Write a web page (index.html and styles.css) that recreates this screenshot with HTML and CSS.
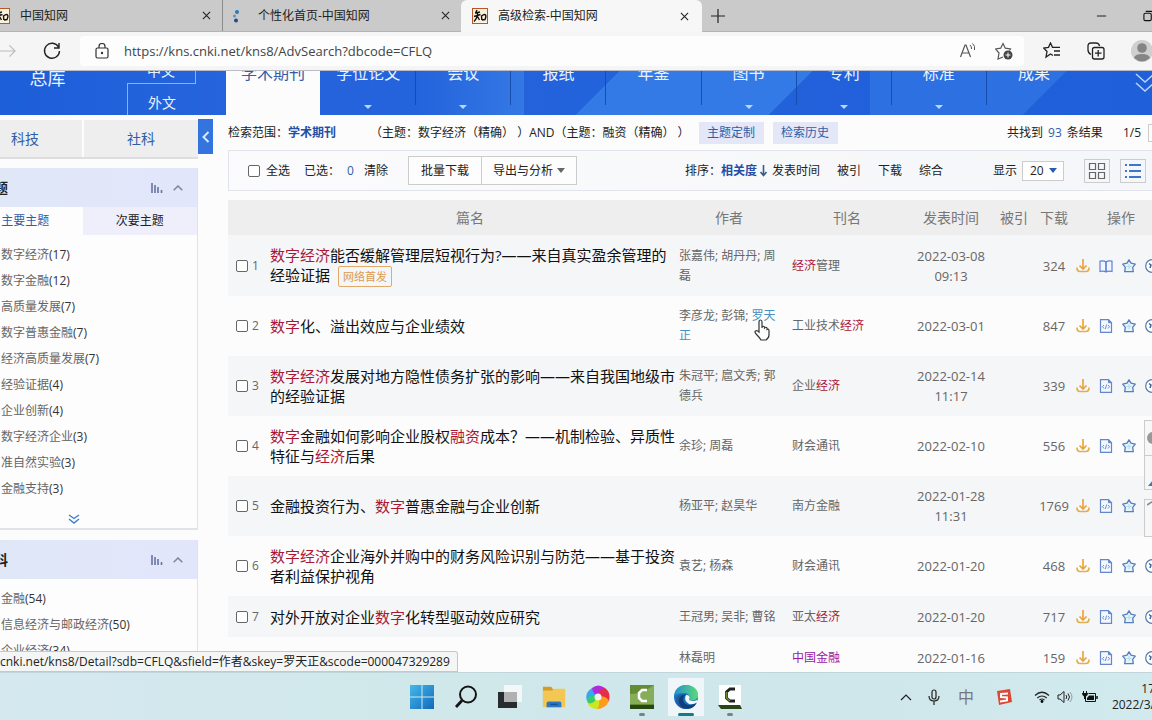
FILE: index.html
```html
<!DOCTYPE html>
<html lang="zh-CN">
<head>
<meta charset="utf-8">
<title>高级检索-中国知网</title>
<link rel="stylesheet" href="styles.css">
</head>
<body>
<svg class="defs" aria-hidden="true">
  <symbol id="close" viewBox="0 0 10 10"><path d="M1 1l8 8M9 1l-8 8" stroke="#222" stroke-width="1.2" fill="none"/></symbol>
  <symbol id="logo" viewBox="0 0 16 16"><rect x=".5" y=".5" width="15" height="15" fill="#fdf1dc" stroke="#b8572a"/><path d="M5 2L3.500 5M3 5l5-1M2 8.500l6.500-2M5.800 4.500C5.500 9 4 11.500 2 13.500M5.500 8.500l2 3.500M9.500 7.500l.3 4.500M9.500 8c4-3 5.500-1 3.500 3.500l-3 .5" stroke="#111" stroke-width="1.400" fill="none"/></symbol>
  <symbol id="down" viewBox="0 0 14 14"><path d="M7 0v10M3.500 6.500L7 10l3.500-3.500" fill="none" stroke="#eda33b" stroke-width="1.700"/><path d="M1 8.500c0 3 1 4 3 4h6c2 0 3-1 3-4" fill="none" stroke="#dfb04f" stroke-width="1.700"/></symbol>
  <symbol id="html" viewBox="0 0 14 14"><path d="M1.500.7h8l3 3v9.600h-11z" fill="#f3f7fe" stroke="#6487cc" stroke-width="1.200"/><path d="M9.500.7v3h3" fill="#6487cc" stroke="#6487cc"/><path d="M5 6L3.500 7.700 5 9.500M9 6l1.500 1.700L9 9.500M7.600 5.500l-1.200 4.500" fill="none" stroke="#6d91d0"/></symbol>
  <symbol id="book" viewBox="0 0 14 14"><path d="M7 3C5.500 1.800 3 1.800 1 2.200v10.300c2-.4 4.500-.4 6 .5 1.500-.9 4-.9 6-.5V2.200C11 1.800 8.500 1.800 7 3zv10" fill="#f0f5ff" stroke="#5e83d2" stroke-width="1.200"/><path d="M7 3v10" stroke="#5e83d2" stroke-width="1.200"/></symbol>
  <symbol id="star" viewBox="0 0 14 14"><path d="M7 .8l2 3.400 4.300 1-2.600 3.200.6 4.300H2.700l.6-4.300L.7 5.200l4.300-1z" fill="#e5f4fa" stroke="#557fbd" stroke-width="1.300" stroke-linejoin="round"/><path d="M4.500 7.500h5M7 5v5" stroke="#b6dbed"/></symbol>
  <symbol id="quote" viewBox="0 0 14 14"><circle cx="7" cy="7" r="6.300" fill="#fff" stroke="#567aa9" stroke-width="1.200"/><path d="M4 4.500l2 1.500-1 3M8 4.500l2 1.500-1 3" stroke="#36669d" stroke-width="1.500" fill="none"/></symbol>
  <symbol id="bars" viewBox="0 0 12 10"><path d="M1 0v10M4 2v8M7 4v6M10.500 7v3" stroke="#6675a0" stroke-width="1.600"/></symbol>
  <symbol id="up" viewBox="0 0 10 6"><path d="M.7 5.300L5 1l4.300 4.300" stroke="#7c85a2" stroke-width="1.500" fill="none"/></symbol>
</svg>

<header class="tabs">
  <div class="tab"><svg class="fav"><use href="#logo"/></svg><span>中国知网</span><button aria-label="关闭标签页"><svg><use href="#close"/></svg></button></div>
  <div class="tab tab-line"><svg class="fav" viewBox="0 0 16 16"><circle cx="7" cy="4" r="2" fill="#2e76b4"/><circle cx="4.500" cy="8" r="1.500" fill="#5c96c2"/><circle cx="6" cy="12.500" r="2" fill="#1c4e88"/></svg><span>个性化首页-中国知网</span><button aria-label="关闭标签页"><svg><use href="#close"/></svg></button></div>
  <div class="tab active"><svg class="fav"><use href="#logo"/></svg><span>高级检索-中国知网</span><button aria-label="关闭标签页"><svg><use href="#close"/></svg></button></div>
  <button class="plus" aria-label="新建标签页"><svg viewBox="0 0 14 14"><path d="M7 0v14M0 7h14" stroke="#222" stroke-width="1.200"/></svg></button>
  <div class="window-buttons">
    <button aria-label="最小化"><svg viewBox="0 0 12 12"><path d="M1 6h10" stroke="#111"/></svg></button>
    <button aria-label="还原"><svg viewBox="0 0 12 12"><rect x="1" y="3" width="8" height="8" rx="1.500" fill="none" stroke="#111" stroke-width="1.200"/><path d="M3 1h6q2 0 2 2v6" fill="none" stroke="#111" stroke-width="1.200"/></svg></button>
  </div>
</header>

<div class="toolbar">
  <button class="forward" aria-label="前进"><svg viewBox="0 0 18 14"><path d="M0 7h16M10 1l6 6-6 6" fill="none" stroke="#bbb" stroke-width="1.200"/></svg></button>
  <button class="reload" aria-label="刷新"><svg viewBox="0 0 18 18"><path d="M15.500 5A7.500 7.500 0 1 0 16.500 9M16 1v5h-5" fill="none" stroke="#222" stroke-width="1.400"/></svg></button>
  <div class="address">
    <svg class="lock" viewBox="0 0 14 16"><rect x="1" y="5" width="12" height="10" rx="1.500" fill="none" stroke="#333" stroke-width="1.200"/><path d="M4 5V3.500a3 3 0 0 1 6 0V5" fill="none" stroke="#333" stroke-width="1.200"/><circle cx="7" cy="10" r="1.200" fill="#333"/></svg>
    <input type="text" aria-label="地址栏" value="https://kns.cnki.net/kns8/AdvSearch?dbcode=CFLQ">
    <button aria-label="大声朗读"><svg viewBox="0 0 18 18"><path d="M1.500 15L6 3h1l4.500 12M3 11h7" fill="none" stroke="#555" stroke-width="1.200"/><path d="M11 3q2 2 1.500 4M13.500 1.500q3 2.500 2 6.500" fill="none" stroke="#555"/></svg></button>
    <button aria-label="添加到收藏夹"><svg viewBox="0 0 18 18"><path d="M8 15l-5 2 1-6-3.500-4 5.200-.8L8 1.500l2.300 4.700 5.200.8-1 1.500" fill="none" stroke="#555" stroke-width="1.200"/><circle cx="13" cy="13" r="4.500" fill="#444"/><path d="M13 10.500v5M10.500 13h5" stroke="#fff"/></svg></button>
  </div>
  <div class="tools">
    <button aria-label="收藏夹"><svg viewBox="0 0 18 18"><path d="M10 13.500L7.500 12 3 15l1-5.500L.7 6l4.800-.7L7.500 1l2 4.300h7.500M11 9h6M11 13h6" fill="none" stroke="#222" stroke-width="1.300"/></svg></button>
    <button aria-label="集锦"><svg viewBox="0 0 18 18"><path d="M4 12.500Q1 11 1 8V4q0-3 3-3h5q3 0 3.500 3" fill="none" stroke="#222" stroke-width="1.300"/><rect x="5.500" y="5.500" width="11.500" height="11.500" rx="2" fill="none" stroke="#222" stroke-width="1.300"/><path d="M11.200 8v6.500M8 11.200h6.500" stroke="#222" stroke-width="1.300"/></svg></button>
    <button class="profile" aria-label="个人资料"><svg viewBox="0 0 22 22"><circle cx="11" cy="11" r="11" fill="#cfcfcf"/><circle cx="11" cy="8" r="4.800" fill="#858585"/><path d="M3 18q1-4 8-4t8 4q-8 7-16 0" fill="#858585"/></svg></button>
  </div>
</div>

<main class="view">
  <nav class="databases">
    <a class="total" href="#">总库</a>
    <div class="language"><a href="#">中文</a><a href="#">外文</a></div>
    <div class="kinds">
      <a class="current" href="#">学术期刊</a><a class="more" href="#">学位论文</a><a class="more" href="#">会议</a><a href="#">报纸</a><a href="#">年鉴</a><a class="more" href="#">图书</a><a class="more" href="#">专利</a><a class="more" href="#">标准</a><a href="#">成果</a>
    </div>
    <button class="expand" aria-label="展开"><svg viewBox="0 0 20 24"><path d="M1 3l9 8 9-8M1 12l9 8 9-8" stroke="#b9d5ff" stroke-width="1.500" fill="none"/></svg></button>
  </nav>

  <div class="page">
    <aside class="side">
      <div class="fields"><button>科技</button><button>社科</button></div>
      <section class="card">
        <h2>主题<span><svg class="bars"><use href="#bars"/></svg><svg class="up"><use href="#up"/></svg></span></h2>
        <div class="switch"><button class="on">主要主题</button><button>次要主题</button></div>
        <ul>
          <li><a href="#">数字经济</a>(17)</li><li><a href="#">数字金融</a>(12)</li><li><a href="#">高质量发展</a>(7)</li><li><a href="#">数字普惠金融</a>(7)</li><li><a href="#">经济高质量发展</a>(7)</li><li><a href="#">经验证据</a>(4)</li><li><a href="#">企业创新</a>(4)</li><li><a href="#">数字经济企业</a>(3)</li><li><a href="#">准自然实验</a>(3)</li><li><a href="#">金融支持</a>(3)</li>
        </ul>
        <button class="unfold" aria-label="更多"><svg viewBox="0 0 12 10"><path d="M1 1l5 3.500L11 1M1 5l5 4 5-4" stroke="#427bc9" stroke-width="1.400" fill="none"/></svg></button>
      </section>
      <section class="card">
        <h2>学科<span><svg class="bars"><use href="#bars"/></svg><svg class="up"><use href="#up"/></svg></span></h2>
        <ul><li><a href="#">金融</a>(54)</li><li><a href="#">信息经济与邮政经济</a>(50)</li><li><a href="#">企业经济</a>(34)</li></ul>
      </section>
    </aside>
    <button class="collapse" aria-label="收起"><svg viewBox="0 0 8 12"><path d="M6.500 1L1.500 6l5 5" stroke="#d8e9ff" stroke-width="2" fill="none"/></svg></button>

    <section class="results">
      <div class="scope">
        <span>检索范围：</span><a class="strong" href="#">学术期刊</a>
        <span class="query">（主题：数字经济（精确） ）AND（主题：融资（精确） ）</span>
        <button class="soft">主题定制</button><button class="soft">检索历史</button>
        <span class="found">共找到 <em>93</em> 条结果</span><span class="pages">1/5</span><span class="pager"></span>
      </div>
      <div class="actions">
        <label class="all"><input type="checkbox">全选</label>
        <span class="chosen">已选：</span><em>0</em><a class="clear" href="#">清除</a>
        <div class="pair"><button>批量下载</button><button>导出与分析<i class="caret"></i></button></div>
        <div class="sort"><span>排序：</span><a class="strong" href="#">相关度<svg viewBox="0 0 8 12"><path d="M4 0v10M1 7l3 3.500L7 7" fill="none" stroke="#3b5a8c" stroke-width="1.600"/></svg></a><a href="#">发表时间</a><a href="#">被引</a><a href="#">下载</a><a href="#">综合</a></div>
        <label class="show">显示<span class="pick"><select><option>20</option></select><i class="caret"></i></span></label>
        <button class="layout" aria-label="网格"><svg viewBox="0 0 18 18"><path d="M1.500 1.500h6v6h-6zM10.500 1.500h6v6h-6zM1.500 10.500h6v6h-6zM10.500 10.500h6v6h-6z" fill="none" stroke="#666" stroke-width="1.200"/></svg></button>
        <button class="layout" aria-label="列表"><svg viewBox="0 0 18 18"><path d="M5 3h12M5 9h12M5 15h12" stroke="#3b78cc" stroke-width="2"/><path d="M1 3h2M1 9h2M1 15h2" stroke="#3b78cc" stroke-width="2"/></svg></button>
      </div>
      <table>
        <colgroup><col class="c-no"><col><col class="c-author"><col class="c-journal"><col class="c-date"><col class="c-num"><col class="c-num"><col class="c-ops"></colgroup>
        <thead><tr><th></th><th>篇名</th><th>作者</th><th>刊名</th><th>发表时间</th><th>被引</th><th>下载</th><th>操作</th></tr></thead>
        <tbody>
          <tr><td class="no"><label><input type="checkbox">1</label></td><td class="name"><a href="#"><b>数字经济</b>能否缓解管理层短视行为?——来自真实盈余管理的<br>经验证据</a><span class="tag">网络首发</span></td><td class="author">张嘉伟; 胡丹丹; 周磊</td><td class="journal"><b>经济</b>管理</td><td class="date">2022-03-08 09:13</td><td></td><td class="num">324</td><td class="ops"><div><svg><use href="#down"/></svg><svg><use href="#book"/></svg><svg><use href="#star"/></svg><svg><use href="#quote"/></svg></div></td></tr>
          <tr><td class="no"><label><input type="checkbox">2</label></td><td class="name"><a href="#"><b>数字</b>化、溢出效应与企业绩效</a></td><td class="author">李彦龙; 彭锦; <a class="hovered" href="#">罗天正<svg class="hand" viewBox="0 0 16 22"><path d="M5 13V3q0-2 1.500-2T8 3v6V8q1.500-1.500 2.500 0v1q1.500-1.500 2.500 0v1.500q2-1 2 1V16q0 3-3 5H7q-1-2-4-5-3-3-1.500-4T5 13z" fill="#fff" stroke="#333" stroke-width="1.200"/></svg></a></td><td class="journal">工业技术<b>经济</b></td><td class="date">2022-03-01</td><td></td><td class="num">847</td><td class="ops"><div><svg><use href="#down"/></svg><svg><use href="#html"/></svg><svg><use href="#star"/></svg><svg><use href="#quote"/></svg></div></td></tr>
          <tr><td class="no"><label><input type="checkbox">3</label></td><td class="name"><a href="#"><b>数字经济</b>发展对地方隐性债务扩张的影响——来自我国地级市<br>的经验证据</a></td><td class="author">朱冠平; 扈文秀; 郭德兵</td><td class="journal">企业<b>经济</b></td><td class="date">2022-02-14 11:17</td><td></td><td class="num">339</td><td class="ops"><div><svg><use href="#down"/></svg><svg><use href="#html"/></svg><svg><use href="#star"/></svg><svg><use href="#quote"/></svg></div></td></tr>
          <tr><td class="no"><label><input type="checkbox">4</label></td><td class="name"><a href="#"><b>数字</b>金融如何影响企业股权<b>融资</b>成本？——机制检验、异质性<br>特征与<b>经济</b>后果</a></td><td class="author">余珍; 周磊</td><td class="journal">财会通讯</td><td class="date">2022-02-10</td><td></td><td class="num">556</td><td class="ops"><div><svg><use href="#down"/></svg><svg><use href="#html"/></svg><svg><use href="#star"/></svg><svg><use href="#quote"/></svg></div></td></tr>
          <tr><td class="no"><label><input type="checkbox">5</label></td><td class="name"><a href="#">金融投资行为、<b>数字</b>普惠金融与企业创新</a></td><td class="author">杨亚平; 赵昊华</td><td class="journal">南方金融</td><td class="date">2022-01-28 11:31</td><td></td><td class="num">1769</td><td class="ops"><div><svg><use href="#down"/></svg><svg><use href="#html"/></svg><svg><use href="#star"/></svg><svg><use href="#quote"/></svg></div></td></tr>
          <tr><td class="no"><label><input type="checkbox">6</label></td><td class="name"><a href="#"><b>数字经济</b>企业海外并购中的财务风险识别与防范——基于投资<br>者利益保护视角</a></td><td class="author">袁艺; 杨森</td><td class="journal">财会通讯</td><td class="date">2022-01-20</td><td></td><td class="num">468</td><td class="ops"><div><svg><use href="#down"/></svg><svg><use href="#html"/></svg><svg><use href="#star"/></svg><svg><use href="#quote"/></svg></div></td></tr>
          <tr class="short"><td class="no"><label><input type="checkbox">7</label></td><td class="name"><a href="#">对外开放对企业<b>数字</b>化转型驱动效应研究</a></td><td class="author">王冠男; 吴非; 曹铭</td><td class="journal">亚太<b>经济</b></td><td class="date">2022-01-20</td><td></td><td class="num">717</td><td class="ops"><div><svg><use href="#down"/></svg><svg><use href="#html"/></svg><svg><use href="#star"/></svg><svg><use href="#quote"/></svg></div></td></tr>
          <tr class="short"><td class="no"></td><td class="name"></td><td class="author">林磊明</td><td class="journal"><a class="visited" href="#">中国金融</a></td><td class="date">2022-01-16</td><td></td><td class="num">159</td><td class="ops"><div><svg><use href="#down"/></svg><svg><use href="#html"/></svg><svg><use href="#star"/></svg><svg><use href="#quote"/></svg></div></td></tr>
        </tbody>
      </table>
    </section>
  </div>

  <div class="dock">
    <div class="dock-group"><button aria-label="客服"><svg viewBox="0 0 12 12"><circle cx="6" cy="6" r="6" fill="#999"/></svg></button><button class="low" aria-label="反馈"><svg viewBox="0 0 12 12"><path d="M1 10l5-6v6z" fill="#3979ba"/></svg></button></div>
    <div class="dock-group"><button class="top" aria-label="返回顶部"><svg viewBox="0 0 12 12"><path d="M0 5l8-5" stroke="#888" stroke-width="1.500"/></svg></button></div>
  </div>
  <div class="status">cnki.net/kns8/Detail?sdb=CFLQ&amp;sfield=作者&amp;skey=罗天正&amp;scode=000047329289</div>
</main>

<footer class="taskbar">
  <div class="apps">
    <button aria-label="开始"><svg viewBox="0 0 24 24"><defs><linearGradient id="win" x2="1" y2="1"><stop stop-color="#43b9e9"/><stop offset="1" stop-color="#1269bd"/></linearGradient></defs><path d="M0 0h11.500v11.500H0zM12.500 0H24v11.500H12.500zM0 12.500h11.500V24H0zM12.500 12.500H24V24H12.500z" fill="url(#win)"/></svg></button>
    <button aria-label="搜索"><svg viewBox="0 0 24 24"><circle cx="14" cy="9.500" r="8" fill="none" stroke="#151515" stroke-width="2"/><path d="M8 15.500L2 22" stroke="#151515" stroke-width="2.800"/></svg></button>
    <button aria-label="任务视图"><svg viewBox="0 0 24 24"><path d="M6 0h18v17H6z" fill="#f4f7f7"/><path d="M0 7h19v16H0z" fill="#292c2e"/><path d="M6 7h13v10H6z" fill="#b0b1b3"/></svg></button>
    <button aria-label="文件资源管理器"><svg viewBox="0 0 26 24"><path d="M1 1h9l2 3h13v18H1z" fill="#d49a24"/><path d="M1 5h10l2-2h12v20H1z" fill="#f4c652"/><path d="M5 23v-4q0-2 2-2h12q2 0 2 2v4z" fill="#2878c3"/><path d="M9 20h8" stroke="#165293" stroke-width="1.500"/></svg></button>
    <button aria-label="浏览器"><svg viewBox="0 0 24 24"><path d="M12 12Q5 11 6 3q6-5 13 0 1 5-7 9" fill="#b02adb"/><path d="M12 12q0-8 7-9 6 4 4 13-5 3-11-4" fill="#e62d48"/><path d="M12 12q8-2 11 4-4 8-12 8-5-5 1-12" fill="#ff9a1c"/><path d="M12 12q3 8-1 12-8 0-10-8 3-6 11-4" fill="#cde71e"/><path d="M12 12q-8 6-11 4-3-8 5-13 1 6 6 9" fill="#36a9ec"/><path d="M12 12q-5 8-10 6l-1-4q4-5 11-2" fill="#3bcd61"/><circle cx="12" cy="12" r="3.500" fill="#edf5ed"/></svg></button>
    <button class="running" aria-label="Camtasia"><svg viewBox="0 0 24 24"><path d="M0 0h24v24H0z" fill="#648c35"/><path d="M0 9Q12 9 24 0v19H0z" fill="#86ad57"/><path d="M0 20h24v4H0z" fill="#294617"/><path d="M17 5h-5L9 8v5l3 3h5" fill="none" stroke="#fff" stroke-width="2.500"/></svg></button>
    <button class="running focus" aria-label="Edge"><svg viewBox="0 0 24 24"><defs><linearGradient id="edge" x2="1"><stop stop-color="#238fd0"/><stop offset="1" stop-color="#5bdb78"/></linearGradient></defs><circle cx="12" cy="12" r="12" fill="#1974be"/><path d="M0 11C1 3 7 0 12 0c8 0 13 6 12 11-1 5-7 5-9 4 2-4-1-7-5-7-5 0-8 1-10 3" fill="url(#edge)"/><path d="M10 9q-5 9 5 14-9 3-13-6Q1 10 10 9" fill="#205ba5"/><path d="M12 10c-4 2-4 9 3 10 4 0 6-1 8-3-3 8-13 9-17 3-3-6 1-11 6-10" fill="#123f79"/><path d="M12 10q5 0 3 5 4 2 8 0l1 2q-5 3-9 2-6-4-3-9" fill="#f3f8fa"/></svg></button>
    <button class="running" aria-label="Camtasia 录制"><svg viewBox="0 0 24 24"><path d="M1 0h22v20H1z" fill="#fff"/><path d="M0 20h22l2 4H3z" fill="#294617"/><path d="M17 4h-5L8.500 7v6l3.500 3h5" fill="none" stroke="#222" stroke-width="2.800"/><path d="M8.500 7v6l3.500 3" fill="none" stroke="#678d37" stroke-width="1.500"/></svg></button>
  </div>
  <div class="tray">
    <svg class="t-up" viewBox="0 0 12 8"><path d="M1 7l5-5 5 5" fill="none" stroke="#222" stroke-width="1.200"/></svg>
    <svg class="t-mic" viewBox="0 0 12 16"><rect x="4" y="1" width="4" height="9" rx="2" fill="none" stroke="#222" stroke-width="1.200"/><path d="M1 7q0 5 5 5t5-5M6 12v4" fill="none" stroke="#222" stroke-width="1.200"/></svg>
    <span class="t-ime">中</span>
    <svg class="t-s" viewBox="0 0 16 16"><path d="M1 2l13-2 2 13-13 3z" fill="#db4935"/><path d="M12 4.500L5 5v3l6 .5v3l-7 1" fill="none" stroke="#fff" stroke-width="2"/></svg>
    <svg class="t-wifi" viewBox="0 0 16 12"><path d="M1 4.500q7-6.500 14 0M3.300 7q4.700-4 9.400 0M5.500 9q2.500-2 5 0" fill="none" stroke="#222" stroke-width="1.200"/><circle cx="8" cy="10.500" r="1.400"/></svg>
    <svg class="t-vol" viewBox="0 0 16 12"><path d="M1 4h2l4-3.500v11L3 8H1z" fill="none" stroke="#222"/><path d="M9 4q1.500 2 0 4M11 2.500q3 3.500 0 7" fill="none" stroke="#222"/><path d="M13 1q4 5 0 10" fill="none" stroke="#999"/></svg>
    <svg class="t-bat" viewBox="0 0 16 12"><path d="M6.500 2.500h7v8h-10V8" fill="none" stroke="#111"/><path d="M7 4.500h5v4.500H5V7z" fill="#111"/><path d="M15 5v3" stroke="#111" stroke-width="1.500"/><path d="M1.500 0v2M4.500 0v2" stroke="#111"/><path d="M0 2h6q0 3-2 3.500V8H2V5.500Q0 5 0 2" fill="#111"/></svg>
    <div class="clock"><span>17</span><span>2022/3/</span></div>
  </div>
</footer>
</body>
</html>
```
FILE: styles.css
```css
* { box-sizing: border-box; }
body {
  margin: 0; height: 100vh; display: flex; flex-direction: column; overflow: hidden;
  font: 12px/20px "Open Sans", "Noto Sans CJK SC", sans-serif; color: #222; background: #fcfcfd;
}
button, input, select { font: inherit; color: inherit; margin: 0; }
button { border: 0; padding: 0; background: none; display: flex; align-items: center; justify-content: center; }
a { color: inherit; text-decoration: none; }
em { font-style: normal; color: #315caa; }
svg { display: block; flex: none; }
.defs { position: absolute; width: 0; height: 0; }

/* browser tabs */
.tabs { flex: none; display: flex; height: 32px; margin-left: -17px; background: #c9cac9; border-bottom: 1px solid #b4b4b4; }
.tab { display: flex; align-items: center; width: 239px; padding: 0 11px 0 11px; gap: 10px; }
.tab-line { border-left: 1px solid #8b8b8b; padding-left: 7px; gap: 12px; }
.tab.active { width: 241px; background: #f7f7f7; border-radius: 6px 6px 0 0; height: 32px; padding: 0 13px 0 11px; }
.fav { width: 16px; height: 16px; }
.tab span { flex: 1; white-space: nowrap; }
.tab button svg { width: 9px; height: 9px; }
.plus { margin-left: 9px; }
.plus svg { width: 14px; height: 14px; }
.window-buttons { margin-left: auto; display: flex; gap: 36px; margin-right: -2px; }
.window-buttons svg { width: 11px; height: 12px; }

.toolbar { flex: none; display: flex; align-items: center; height: 39px; background: #f5f5f5; border-bottom: 1px solid #b9bcc4; }
.forward svg { width: 17px; height: 14px; }
.reload { margin-left: 26px; }
.reload svg { width: 18px; height: 18px; }
.address { flex: 1; display: flex; align-items: center; height: 30px; margin-left: 19px; padding: 0 11px 0 15px; border-radius: 4px; background: #fdfdfd; }
.lock { width: 14px; height: 16px; }
.address input { flex: 1; min-width: 0; border: 0; background: none; padding: 0; margin-left: 15px; font-size: 13px; color: #444; outline: 0; }
.address button { margin-left: 18px; }
.address button svg, .tools svg { width: 18px; height: 18px; }
.tools { display: flex; gap: 26px; margin: 0 0 0 19px; }
.tools .profile { margin-right: -1px; }
.tools .profile svg { width: 22px; height: 22px; }

/* database navigation, scrolled under the toolbar */
.view { position: relative; flex: 1; min-height: 0; overflow: hidden; }
.databases {
  display: flex; height: 68px; margin-top: -24px; color: #e9f3ff; overflow: hidden;
  background:
    linear-gradient(90deg, transparent, #3478e4) 416px 0 / 108px 100% no-repeat,
    linear-gradient(135deg, transparent 40%, #347ae7 40%) 560px 0 / 140px 100% no-repeat,
    linear-gradient(135deg, #347ae7 60%, transparent 60%) 700px 0 / 160px 100% no-repeat,
    linear-gradient(135deg, #2d70e2 60%, transparent 60%) 870px 0 / 300px 100% no-repeat,
    linear-gradient(90deg, #1d5ed9, #2564dc 20%, #1f5fd9);
}
.total { width: 95px; flex: none; font-size: 18px; line-height: 62px; text-align: center; }
.language { flex: none; width: 131px; padding-left: 32px; font-size: 14px; }
.language a { display: block; text-align: center; }
.language a:first-child { width: 69px; height: 37px; line-height: 48px; border: 1px solid #86b3f5; border-width: 0 1px 1px 0; }
.language a:last-child { height: 31px; padding-right: 30px; line-height: 37px; border-left: 1px solid #86b3f5; }
.kinds { display: flex; flex: 1; max-width: 855px; }
.kinds a { position: relative; flex: 1; font-size: 16px; line-height: 52px; height: 58px; text-align: center; border-left: 1px solid #174eae; white-space: nowrap; }
.kinds a.current { height: 68px; background: #fcfcfd; color: #345ca7; border: 0; }
.kinds a.current + a { border-color: transparent; }
.kinds .more::after { content: ""; position: absolute; left: calc(50% - 4px); bottom: -4px; border: 4px solid transparent; border-top-color: #b7d8ff; border-bottom: 0; }
.expand { flex: none; margin-left: auto; margin-right: -3px; padding-top: 4px; }
.expand svg { width: 20px; height: 24px; }

.page { display: flex; align-items: flex-start; margin: 0 -16px 0 -32px; }
.side { flex: none; width: 230px; padding-top: 5px; }
.fields { display: flex; gap: 2px; border-bottom: 2px solid #dedede; }
.fields button { flex: 1; height: 37px; background: #eeeeef; color: #315da5; font-size: 14px; }
.card { margin-top: 9px; padding-bottom: 2px; border: solid #e2e3e7; border-width: 0 1px 2px 0; background: #fdfdfd; }
.card + .card { margin-top: 10px; }
.card h2 { display: flex; align-items: center; height: 39px; margin: 0; padding: 0 14px 0 12px; background: linear-gradient(90deg, #dfe8f7, #e3e6fb); font-size: 14px; }
.card h2 span { display: flex; align-items: center; gap: 10px; margin-left: auto; }
.bars { width: 12px; height: 10px; }
.up { width: 10px; height: 6px; }
.switch { display: flex; }
.switch button { flex: 1; height: 28px; background: #efeffb; }
.switch .on { background: none; color: #315ca6; }
.card ul { list-style: none; margin: 0; padding: 7px 0 0 33px; }
.card li { height: 26px; line-height: 26px; color: #333; }
.card li a { color: #666; }
.unfold { width: 100%; height: 24px; padding: 10px 17px 0 0; }
.unfold svg { width: 12px; height: 10px; }
.collapse { flex: none; width: 15px; height: 35px; margin-top: 4px; background: #3374df; }
.collapse svg { width: 8px; height: 12px; }

/* results */
.results { flex: 1; min-width: 0; margin-left: 15px; padding-top: 7px; }
.scope { display: flex; align-items: center; height: 22px; white-space: nowrap; }
.strong { color: #244ea6; font-weight: bold; }
.query { margin-left: 34px; }
.soft { height: 22px; width: 65px; margin-left: 9px; background: #e3e7f7; color: #315da5; }
.found { margin-left: auto; }
.found em { margin: 0 2px; }
.pages { margin-left: 20px; }
.pager { width: 20px; height: 18px; margin-left: 7px; border: 1px solid #ccc; }
.actions { display: flex; align-items: center; height: 41px; margin-top: 6px; padding: 0 21px 0 19px; border: 1px solid #e1e4eb; background: linear-gradient(90deg, #fbfbfd, #f5f6f9); white-space: nowrap; }
input[type="checkbox"] { appearance: none; flex: none; width: 12px; height: 12px; border: 1px solid #666; border-radius: 2px; background: #fff; }
.all { display: flex; align-items: center; gap: 6px; }
.chosen { margin-left: 14px; }
.actions em { margin-left: 7px; }
.clear { margin-left: 10px; }
.pair { display: flex; margin-left: 20px; border: 1px solid #ccc; background: #fdfdfd; }
.pair button { height: 27px; padding: 0 12px; }
.pair button + button { border-left: 1px solid #ccc; padding: 0 11px; }
.caret { flex: none; border: 4px solid transparent; border-top: 5px solid #666; border-bottom: 0; margin-left: 4px; }
.sort { display: flex; margin-left: auto; }
.sort a { margin-right: 17px; }
.sort .strong { display: flex; align-items: center; gap: 2px; margin-right: 4px; }
.sort svg { width: 9px; height: 12px; }
.show { display: flex; align-items: center; gap: 5px; margin-left: 33px; }
.pick { display: flex; align-items: center; width: 42px; height: 20px; border: 1px solid #ccc; background: #fff; }
.pick select { appearance: none; width: 26px; border: 0; padding: 0 0 0 7px; background: none; }
.pick .caret { border-top-color: #245caf; margin-left: 0; }
.layout { width: 26px; height: 24px; margin-left: 20px; border: 1px solid #ccc; }
.layout + .layout { margin-left: 10px; }
.layout svg { width: 18px; height: 18px; }

table { width: 100%; margin-top: 9px; border-collapse: collapse; table-layout: fixed; color: #666; }
.c-no { width: 40px; }
.c-author { width: 114px; }
.c-journal { width: 122px; }
.c-date { width: 86px; }
.c-num { width: 40px; }
.c-ops { width: 94px; }
th { height: 35px; padding: 0; background: #eeeeef; font-size: 14px; font-weight: normal; color: #777; }
td { height: 60px; padding: 0; }
tr:first-child td { height: 61px; }
.short td { height: 41px; }
tbody tr:nth-child(odd) { background: #f5f6f8; }
td b { font-weight: normal; color: #aa1735; }
.no label { display: flex; align-items: center; gap: 4px; padding-left: 8px; }
.name { padding-left: 2px; font-size: 15px; color: #111; white-space: nowrap; }
.tag { margin-left: 8px; padding: 2px 4px; border: 1px solid #e3aa67; border-radius: 2px; font-size: 11px; color: #dc9a4c; }
.author { padding: 0 7px; }
.journal { padding-left: 6px; }
.date { font-size: 13px; text-align: center; padding: 0 4px; }
.num { font-size: 13px; text-align: center; }
.hovered { position: relative; color: #4890bd; }
.hand { position: absolute; left: 2px; top: 12px; width: 16px; height: 22px; }
.visited { color: #9a18a5; }
.ops div { display: flex; gap: 9px; padding-left: 2px; }
.ops svg { width: 14px; height: 14px; }

/* items floating over the page */
.dock { position: absolute; right: 0; top: 349px; display: flex; flex-direction: column; gap: 9px; width: 8px; }
.dock-group { border: 1px solid #ccc; border-right: 0; background: #f7f7f7; overflow: hidden; }
.dock button { width: 16px; height: 34px; }
.dock .low { border-top: 1px solid #ccc; padding-top: 18px; }
.dock .top { height: 36px; align-items: flex-start; }
.dock svg { width: 12px; height: 12px; }
.status { position: absolute; left: 0; bottom: 0; height: 21px; padding-right: 7px; border: 1px solid #c5c8cb; border-left: 0; border-radius: 0 3px 0 0; background: #f4f5f5; line-height: 20px; white-space: nowrap; }

.taskbar { flex: none; position: relative; display: flex; align-items: center; justify-content: center; height: 48px; border-top: 1px solid #c3d5dc; background: linear-gradient(90deg, #d5e8f0, #d0e8ea 40%, #cfe6eb 70%, #d1eaed); }
.apps { display: flex; }
.apps button { position: relative; width: 44px; height: 38px; }
.apps svg { width: 24px; height: 24px; }
.running::after { content: ""; position: absolute; left: 50%; bottom: 0; width: 6px; margin-left: -3px; height: 3px; border-radius: 2px; background: #75838a; }
.focus { background: #eef6fa; border-radius: 4px; background-clip: content-box; padding: 0 4px; }
.focus::after { width: 16px; margin-left: -8px; background: #147a83; }
.tray { position: absolute; right: -3px; top: 0; bottom: 0; display: flex; align-items: center; }
.t-up { width: 12px; height: 8px; }
.t-mic { width: 12px; height: 16px; margin-left: 16px; }
.t-ime { margin-left: 18px; font-size: 16px; color: #777; }
.t-s { width: 16px; height: 16px; margin-left: 22px; }
.t-wifi { width: 16px; height: 12px; margin-left: 22px; }
.t-vol { width: 16px; height: 12px; margin-left: 7px; }
.t-bat { width: 16px; height: 12px; margin-left: 9px; }
.clock { display: flex; flex-direction: column; align-items: flex-end; margin-left: 14px; line-height: 16px; }
```
